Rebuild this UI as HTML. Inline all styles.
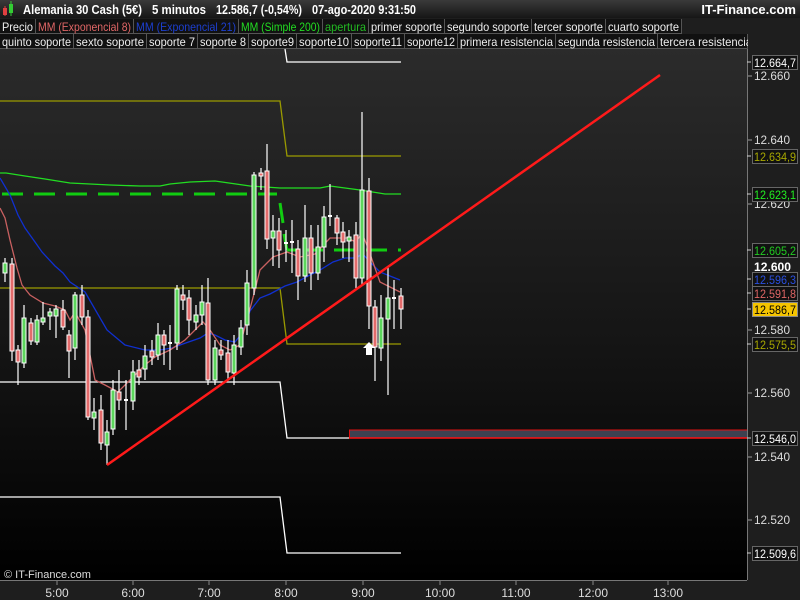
<!DOCTYPE html>
<html><head><meta charset="utf-8"><style>
*{margin:0;padding:0}
body{width:800px;height:600px;overflow:hidden;background:#000;font-family:"Liberation Sans",sans-serif}
svg{display:block}
</style></head><body>
<svg width="800" height="600" xmlns="http://www.w3.org/2000/svg" font-family="Liberation Sans, sans-serif">
<defs>
<linearGradient id="bg" x1="0" y1="0" x2="0" y2="1"><stop offset="0" stop-color="#2b2b2b"/><stop offset="0.55" stop-color="#151515"/><stop offset="1" stop-color="#000"/></linearGradient>
<linearGradient id="hd" x1="0" y1="0" x2="0" y2="1"><stop offset="0" stop-color="#3a3a3a"/><stop offset="1" stop-color="#161616"/></linearGradient>
</defs>
<rect width="800" height="600" fill="#1e1e1e"/>
<rect x="0" y="49" width="747" height="531" fill="url(#bg)"/>
<!-- header -->
<rect x="0" y="0" width="800" height="18" fill="url(#hd)"/>
<rect x="3" y="8" width="4" height="7" fill="#e04040"/><line x1="5" y1="6" x2="5" y2="16" stroke="#e04040"/>
<rect x="9" y="4" width="4" height="9" fill="#3c3"/><line x1="11" y1="1" x2="11" y2="16" stroke="#3c3"/>
<g fill="#fff" font-size="13" font-weight="bold">
<text x="23" y="14" textLength="119" lengthAdjust="spacingAndGlyphs">Alemania 30 Cash (5€)</text>
<text x="152" y="14" textLength="54" lengthAdjust="spacingAndGlyphs">5 minutos</text>
<text x="216" y="14" textLength="86" lengthAdjust="spacingAndGlyphs">12.586,7 (-0,54%)</text>
<text x="312" y="14" textLength="104" lengthAdjust="spacingAndGlyphs">07-ago-2020 9:31:50</text>
<text x="796" y="14" text-anchor="end">IT-Finance.com</text>
</g>
<!-- legend -->
<g font-size="12">
<rect x="0" y="19" width="681" height="15" fill="#111"/>
<rect x="0" y="34" width="747" height="15" fill="#111"/>
<g stroke="#555" fill="none">
<path d="M35.5 19v15M133.5 19v15M238.5 19v15M322.5 19v15M368.5 19v15M444.5 19v15M531.5 19v15M605.5 19v15M681.5 19v15"/>
<path d="M73.5 34v15M146.5 34v15M197.5 34v15M248.5 34v15M296.5 34v15M351.5 34v15M404.5 34v15M457.5 34v15M555.5 34v15M657.5 34v15M747.5 34v15"/>
<path d="M0 33.5h681M0 48.5h747"/>
</g>
<g lengthAdjust="spacingAndGlyphs">
<text x="2" y="31" fill="#eee" textLength="31" lengthAdjust="spacingAndGlyphs">Precio</text>
<text x="38" y="31" fill="#e06666" textLength="93" lengthAdjust="spacingAndGlyphs">MM (Exponencial 8)</text>
<text x="136" y="31" fill="#1d3fd0" textLength="100" lengthAdjust="spacingAndGlyphs">MM (Exponencial 21)</text>
<text x="241" y="31" fill="#22dd22" textLength="79" lengthAdjust="spacingAndGlyphs">MM (Simple 200)</text>
<text x="325" y="31" fill="#22bb22" textLength="41" lengthAdjust="spacingAndGlyphs">apertura</text>
<text x="371" y="31" fill="#eee" textLength="71" lengthAdjust="spacingAndGlyphs">primer soporte</text>
<text x="447" y="31" fill="#eee" textLength="82" lengthAdjust="spacingAndGlyphs">segundo soporte</text>
<text x="534" y="31" fill="#eee" textLength="69" lengthAdjust="spacingAndGlyphs">tercer soporte</text>
<text x="608" y="31" fill="#eee" textLength="71" lengthAdjust="spacingAndGlyphs">cuarto soporte</text>
<text x="2" y="46" fill="#eee" textLength="69" lengthAdjust="spacingAndGlyphs">quinto soporte</text>
<text x="76" y="46" fill="#eee" textLength="68" lengthAdjust="spacingAndGlyphs">sexto soporte</text>
<text x="149" y="46" fill="#eee" textLength="46" lengthAdjust="spacingAndGlyphs">soporte 7</text>
<text x="200" y="46" fill="#eee" textLength="46" lengthAdjust="spacingAndGlyphs">soporte 8</text>
<text x="251" y="46" fill="#eee" textLength="43" lengthAdjust="spacingAndGlyphs">soporte9</text>
<text x="299" y="46" fill="#eee" textLength="50" lengthAdjust="spacingAndGlyphs">soporte10</text>
<text x="354" y="46" fill="#eee" textLength="48" lengthAdjust="spacingAndGlyphs">soporte11</text>
<text x="407" y="46" fill="#eee" textLength="48" lengthAdjust="spacingAndGlyphs">soporte12</text>
<text x="460" y="46" fill="#eee" textLength="93" lengthAdjust="spacingAndGlyphs">primera resistencia</text>
<text x="558" y="46" fill="#eee" textLength="97" lengthAdjust="spacingAndGlyphs">segunda resistencia</text>
<text x="660" y="46" fill="#eee" textLength="92" lengthAdjust="spacingAndGlyphs">tercera resistencia</text>
</g>
</g>
<rect x="748" y="34" width="52" height="15" fill="#1e1e1e"/>
<!-- levels -->
<g fill="none" stroke-width="1.3">
<path d="M0 101H280L287 156H401" stroke="#9a9a00"/>
<path d="M0 288H280L287 344H401" stroke="#9a9a00"/>
<path d="M285 49L287 62H401" stroke="#fff"/>
<path d="M0 382H280L287 438H349" stroke="#fff"/>
<path d="M0 497H280L287 553H401" stroke="#fff"/>
</g>
<rect x="349.5" y="430" width="398" height="8" fill="#3e4150" stroke="#e01010"/>
<line x1="349" y1="438" x2="747" y2="438" stroke="#ff1010" stroke-width="1.5"/>
<polyline fill="none" stroke="#22dd22" stroke-width="1.3" points="0,173 6,173 25,176 45,179 70,183 90,184 110,185 140,186 160,186 170,184 190,182 215,181 250,186 280,188 320,188 330,186 360,190 385,194 401,194"/>
<path d="M0 194H277" stroke="#11cc11" stroke-width="3" stroke-dasharray="21 11" stroke-dashoffset="-2" fill="none"/>
<path d="M280 203L283 223M284 234L287 250M287 250H296M303 250H323M334 250H355M366 250H387M398 250H401" stroke="#11cc11" stroke-width="3" fill="none"/>
<polyline fill="none" stroke="#1030d0" stroke-width="1.3" points="0,178 10,195 18,215 25,228 35,242 42,252 55,266 63,273 70,282 85,292 107,330 125,345 145,350 160,350 172,348 180,345 200,338 208,333 215,335 225,340 235,342 243,332 250,311 260,298 270,294 285,286 297,282 310,275 320,270 333,262 345,258 357,258 362,253 370,262 380,272 390,276 400,280"/>
<polyline fill="none" stroke="#c86060" stroke-width="1.3" points="0,208 5,218 10,240 17,268 22,285 30,295 43,303 55,306 65,310 70,320 75,312 85,330 95,380 105,385 118,392 125,385 135,375 145,365 155,357 170,350 185,340 203,322 210,330 220,345 230,350 240,345 247,320 255,290 260,270 273,257 287,252 300,257 315,254 330,238 347,238 356,242 362,233 368,248 375,268 380,282 390,287 400,292"/>
<g stroke="#fff" stroke-width="1.2" fill="none">
<path d="M5 258V282M12 258V361M18 345V385M24 305V368M31 318V345M37 315V345M43 302V325M50 308V330M56 305V338M63 300V330M69 330V378M75 292V360M82 285V325M88 310V420M94 398V430M101 395V450M107 420V465M113 380V435M119 370V410M126 380V430M133 360V410M139 360V385M145 345V380M152 340V365M158 323V360M164 330V365M170 325V370M177 285V350M183 285V310M189 290V335M196 305V330M202 285V325M208 278V385M215 340V385M221 340V360M228 340V380M234 335V385M241 320V355M247 270V335M254 172V295M261 168V190M267 144V249M273 215V266M279 218V268M286 230V262M292 220V273M298 240V300M305 205V282M311 225V290M318 225V280M324 206V262M330 184V226M337 215V245M343 222V258M349 230V262M356 222V288M362 112V285M369 178V329M375 300V381M381 295V361M388 266V395M394 280V329M401 288V329"/>
</g>
<g stroke="#fff" stroke-width="1">
<g fill="#5cd65c">
<rect x="3" y="263" width="4" height="10"/><rect x="22" y="318" width="4" height="45"/><rect x="35" y="320" width="4" height="22"/><rect x="41" y="318" width="4" height="4"/><rect x="48" y="312" width="4" height="4"/><rect x="54" y="309" width="4" height="7"/><rect x="73" y="295" width="4" height="53"/><rect x="92" y="412" width="4" height="6"/><rect x="105" y="432" width="4" height="13"/><rect x="111" y="390" width="4" height="39"/><rect x="131" y="372" width="4" height="29"/><rect x="143" y="356" width="4" height="13"/><rect x="156" y="335" width="4" height="20"/><rect x="175" y="289" width="4" height="54"/><rect x="194" y="315" width="4" height="7"/><rect x="200" y="302" width="4" height="13"/><rect x="213" y="348" width="4" height="32"/><rect x="232" y="345" width="4" height="28"/><rect x="239" y="328" width="4" height="19"/><rect x="245" y="283" width="4" height="42"/><rect x="252" y="175" width="4" height="113"/><rect x="271" y="231" width="4" height="7"/><rect x="303" y="238" width="4" height="38"/><rect x="316" y="247" width="4" height="26"/><rect x="322" y="217" width="4" height="30"/><rect x="347" y="237" width="4" height="4"/><rect x="360" y="190" width="4" height="88"/><rect x="379" y="318" width="4" height="30"/><rect x="386" y="298" width="4" height="21"/>
</g>
<g fill="#e36b6b">
<rect x="10" y="264" width="4" height="87"/><rect x="16" y="350" width="4" height="12"/><rect x="29" y="323" width="4" height="18"/><rect x="61" y="310" width="4" height="17"/><rect x="67" y="335" width="4" height="16"/><rect x="80" y="295" width="4" height="22"/><rect x="86" y="317" width="4" height="100"/><rect x="99" y="410" width="4" height="33"/><rect x="117" y="392" width="4" height="8"/><rect x="137" y="370" width="4" height="7"/><rect x="150" y="351" width="4" height="6"/><rect x="162" y="335" width="4" height="10"/><rect x="181" y="295" width="4" height="5"/><rect x="187" y="298" width="4" height="22"/><rect x="206" y="303" width="4" height="77"/><rect x="219" y="350" width="4" height="5"/><rect x="226" y="353" width="4" height="19"/><rect x="259" y="173" width="4" height="3"/><rect x="265" y="171" width="4" height="68"/><rect x="277" y="231" width="4" height="19"/><rect x="296" y="249" width="4" height="27"/><rect x="309" y="238" width="4" height="35"/><rect x="335" y="218" width="4" height="15"/><rect x="341" y="232" width="4" height="10"/><rect x="354" y="235" width="4" height="43"/><rect x="367" y="191" width="4" height="115"/><rect x="373" y="307" width="4" height="40"/><rect x="399" y="296" width="4" height="13"/>
</g>
<path d="M124 400H128M168 343H172M284 243H288M290 242H294M328 216H332M392 298H396" fill="none" stroke-width="2"/>
</g>
<path d="M369 342L375 348H372V355H366V348H363Z" fill="#fff"/>
<line x1="107" y1="465" x2="660" y2="75" stroke="#ff1a1a" stroke-width="2.5"/>
<text x="4" y="578" fill="#ddd" font-size="11">© IT-Finance.com</text>
<line x1="747.5" y1="49" x2="747.5" y2="580" stroke="#777"/>
<line x1="0" y1="580.5" x2="747" y2="580.5" stroke="#777"/>
<g stroke="#888"><path d="M57 581v4M133 581v4M209 581v4M286 581v4M363 581v4M440 581v4M516 581v4M593 581v4M668 581v4"/></g>
<g fill="#ddd" font-size="12" text-anchor="middle">
<text x="57" y="597">5:00</text><text x="133" y="597">6:00</text><text x="209" y="597">7:00</text><text x="286" y="597">8:00</text><text x="363" y="597">9:00</text><text x="440" y="597">10:00</text><text x="516" y="597">11:00</text><text x="593" y="597">12:00</text><text x="668" y="597">13:00</text>
</g>
<g stroke="#999"><path d="M748 76h4M748 140h4M748 204h4M748 330h4M748 393h4M748 457h4M748 520h4"/></g>
<g fill="#ddd" font-size="12">
<text x="754" y="80" textLength="36" lengthAdjust="spacingAndGlyphs">12.660</text><text x="754" y="144" textLength="36" lengthAdjust="spacingAndGlyphs">12.640</text><text x="754" y="208" textLength="36" lengthAdjust="spacingAndGlyphs">12.620</text><text x="754" y="334" textLength="36" lengthAdjust="spacingAndGlyphs">12.580</text><text x="754" y="397" textLength="36" lengthAdjust="spacingAndGlyphs">12.560</text><text x="754" y="461" textLength="36" lengthAdjust="spacingAndGlyphs">12.540</text><text x="754" y="524" textLength="36" lengthAdjust="spacingAndGlyphs">12.520</text>
<text x="754" y="271" font-weight="bold" fill="#fff" textLength="37" lengthAdjust="spacingAndGlyphs">12.600</text>
</g>
<g font-size="12" stroke-width="1">
<g stroke="#666" fill="#111">
<rect x="752.5" y="55.5" width="45" height="14"/><rect x="752.5" y="149.5" width="45" height="14"/><rect x="752.5" y="187.5" width="45" height="14"/><rect x="752.5" y="243.5" width="45" height="14"/><rect x="752.5" y="272.5" width="45" height="14"/><rect x="752.5" y="286.5" width="45" height="14"/><rect x="752.5" y="337.5" width="45" height="14"/><rect x="752.5" y="431.5" width="45" height="14"/><rect x="752.5" y="546.5" width="45" height="14"/>
</g>
<rect x="752.5" y="302.5" width="45" height="14" fill="#f5c400" stroke="#888"/>
<path d="M747 62h4M747 156h4M747 194h4M747 250h4M747 279h4M747 293h4M747 309h4M747 344h4M747 438h4M747 553h4" stroke="#ccc"/>
<text x="754" y="67" fill="#fff" textLength="42" lengthAdjust="spacingAndGlyphs">12.664,7</text>
<text x="754" y="161" fill="#a8a800" textLength="42" lengthAdjust="spacingAndGlyphs">12.634,9</text>
<text x="754" y="199" fill="#22ee22" textLength="42" lengthAdjust="spacingAndGlyphs">12.623,1</text>
<text x="754" y="255" fill="#22cc22" textLength="42" lengthAdjust="spacingAndGlyphs">12.605,2</text>
<text x="754" y="284" fill="#2a4fe0" textLength="42" lengthAdjust="spacingAndGlyphs">12.596,3</text>
<text x="754" y="298" fill="#e06666" textLength="42" lengthAdjust="spacingAndGlyphs">12.591,8</text>
<text x="754" y="314" fill="#000" textLength="42" lengthAdjust="spacingAndGlyphs">12.586,7</text>
<text x="754" y="349" fill="#a8a800" textLength="42" lengthAdjust="spacingAndGlyphs">12.575,5</text>
<text x="754" y="443" fill="#fff" textLength="42" lengthAdjust="spacingAndGlyphs">12.546,0</text>
<text x="754" y="558" fill="#fff" textLength="42" lengthAdjust="spacingAndGlyphs">12.509,6</text>
</g>
</svg>
</body></html>
